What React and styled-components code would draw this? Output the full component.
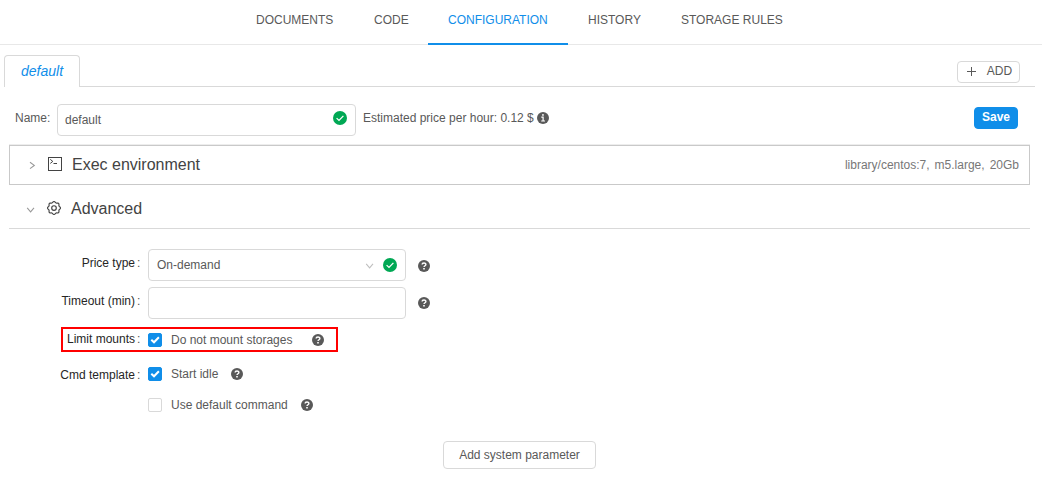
import React from "react";
import styled, { createGlobalStyle, css } from "styled-components";

const Global = createGlobalStyle`
  * { box-sizing: border-box; }
  body {
    margin: 0;
    background: #fff;
    color: #595959;
    font: 12px/18px "Liberation Sans", Arial, sans-serif;
  }
`;

const Page = styled.div`
  width: 1042px;
  height: 477px;
  overflow: hidden;
`;

const Nav = styled.nav`
  display: flex;
  justify-content: center;
  height: 45px;
  padding-right: 3px;
  border-bottom: 1px solid #e8e8e8;
`;

const NavItem = styled.a`
  width: ${(p) => p.$width}px;
  height: 45px;
  padding: 11px 0 0 20px;
  white-space: nowrap;
  color: ${(p) => (p.$active ? "#108ee9" : "#595959")};
  border-bottom: 2px solid ${(p) => (p.$active ? "#108ee9" : "transparent")};
`;

const TabBar = styled.div`
  display: flex;
  align-items: flex-start;
  justify-content: space-between;
  height: 32px;
  margin: 10px 7px 0 4px;
  padding-right: 15px;
  box-shadow: inset 0 -1px #d9d9d9;
`;

const Tab = styled.div`
  width: 76px;
  height: 32px;
  padding-left: 16px;
  border: 1px solid #d9d9d9;
  border-bottom: 0;
  border-radius: 4px 4px 0 0;
  background: #fff;
  color: #108ee9;
  font-size: 14px;
  font-style: italic;
  line-height: 31px;
`;

const Button = styled.button`
  display: flex;
  align-items: center;
  justify-content: center;
  padding: 0;
  border: 1px solid #d9d9d9;
  border-radius: 4px;
  background: #fff;
  color: #595959;
  font: inherit;
`;

const AddButton = styled(Button)`
  width: 63px;
  height: 22px;
  margin-top: 6px;
  gap: 11px;
  padding: 0 0 2px 2px;
`;

const SaveButton = styled(Button)`
  width: 44px;
  height: 22px;
  margin: 3px 12px 0 auto;
  padding-bottom: 2px;
  border-color: #108ee9;
  background: #108ee9;
  color: #fff;
  font-weight: bold;
`;

const ParameterButton = styled(Button)`
  width: 153px;
  height: 28px;
  margin: 24px 0 0 443px;
`;

const NameRow = styled.div`
  display: flex;
  align-items: flex-start;
  height: 32px;
  margin: 17px 12px 0 15px;
`;

const NameLabel = styled.label`
  width: 42px;
  padding-top: 5px;
`;

const Field = styled.div`
  display: flex;
  align-items: center;
  width: ${(p) => p.$width}px;
  height: 32px;
  padding: 0 8px 0 7px;
  border: 1px solid #d9d9d9;
  border-radius: 4px;
`;

const FieldText = styled.span`
  flex: 1;
  padding-left: ${(p) => p.$indent || 0}px;
`;

const FieldIcon = styled.span`
  display: flex;
  margin-left: ${(p) => p.$gap || 0}px;
  padding-bottom: ${(p) => p.$lift || 0}px;
`;

const Price = styled.div`
  display: flex;
  padding: 5px 0 0 7px;
  white-space: nowrap;
  svg { margin: 3px 0 0 3px; }
`;

const SectionHeader = styled.div`
  display: flex;
  align-items: center;
  margin-left: 9px;
  width: 1021px;
  padding: 0 10px 0 16px;
  ${(p) =>
    p.$boxed
      ? css`
          height: 40px;
          margin-top: 9px;
          border: 1px solid #c9c9c9;
          box-shadow: 0 -1px #ededed;
        `
      : css`
          height: 44px;
          padding-top: 4px;
          border-bottom: 1px solid #d9d9d9;
        `}
`;

const SectionTitle = styled.h2`
  flex: 1;
  margin: 0 0 0 ${(p) => p.$gap}px;
  color: #434343;
  font-size: 16px;
  font-weight: normal;
  line-height: 20px;
`;

const Summary = styled.div`
  display: flex;
  gap: 5px;
  color: #777;
`;

const SectionIcon = styled.span`
  display: flex;
  padding-bottom: 2px;
  margin-left: ${(p) => p.$gap}px;
`;

const Form = styled.div`
  display: flex;
  flex-direction: column;
  margin: 20px 0 0 61px;
`;

const FormRow = styled.div`
  display: flex;
  align-items: center;
  height: ${(p) => p.$height}px;
  margin-bottom: ${(p) => p.$gap}px;
`;

const LimitRow = styled(FormRow)`
  width: 277px;
  margin-bottom: 10px;
  padding-right: 12px;
  border: 2px solid #f00;
  justify-content: space-between;
`;

const Group = styled.div`
  display: flex;
  align-items: center;
`;

const FormLabel = styled.label`
  display: flex;
  justify-content: flex-end;
  width: ${(p) => p.$width || 87}px;
  padding-right: 8px;
  padding-bottom: ${(p) => p.$lift || 0}px;
  padding-top: ${(p) => p.$drop || 0}px;
  color: #262626;
  white-space: nowrap;
  &::after {
    content: ${(p) => (p.children ? '":"' : '""')};
    margin-left: 2px;
    width: 3px;
    color: #555;
  }
`;

const Box = styled.span`
  display: flex;
  width: 14px;
  height: 14px;
  margin-right: 9px;
  border-radius: 2px;
  border: 1px solid ${(p) => (p.$checked ? "#108ee9" : "#d9d9d9")};
  background: ${(p) => (p.$checked ? "#108ee9" : "#fff")};
`;

const HelpSlot = styled.span`
  display: flex;
  padding-top: ${(p) => p.$drop || 0}px;
  margin-left: ${(p) => p.$gap}px;
`;

const Checkbox = ({ checked }) => (
  <Box $checked={checked} role="checkbox" aria-checked={!!checked}>
    {checked && (
      <svg width="12" height="12" viewBox="0 0 12 12" fill="none" stroke="#fff" strokeWidth="2">
        <path d="M2.3 5.7 5 8.3 9.9 3.2" />
      </svg>
    )}
  </Box>
);

const HelpIcon = () => (
  <svg width="12" height="12" viewBox="0 0 12 12">
    <circle cx="6" cy="6" r="6" fill="#595959" />
    <path d="M4.1 4.6C4.1 2.4 7.9 2.4 7.9 4.5 7.9 5.8 6 5.7 6 7.1" fill="none" stroke="#fff" strokeWidth="1.4" />
    <rect x="5.2" y="8" width="1.6" height="1.5" fill="#fff" />
  </svg>
);

const InfoIcon = () => (
  <svg width="12" height="12" viewBox="0 0 12 12">
    <circle cx="6" cy="6" r="6" fill="#595959" />
    <path d="M4.3 5.2H6.1V8.9M4.2 9H8" fill="none" stroke="#fff" strokeWidth="1.2" />
    <rect x="5.1" y="2.2" width="1.7" height="1.5" fill="#fff" />
  </svg>
);

const ValidIcon = () => (
  <svg width="14" height="14" viewBox="0 0 14 14">
    <circle cx="7" cy="7" r="7" fill="#00a854" />
    <path d="M3.6 7.1 6 9.4 10.4 4.9" fill="none" stroke="#fff" strokeWidth="1.3" />
  </svg>
);

const Chevron = ({ right, color = "#999" }) => (
  <svg width="12" height="12" viewBox="0 0 12 12" fill="none" stroke={color} strokeWidth="1.1">
    <path d={right ? "M4 3.2 8.3 6.4 4 9.6" : "M2.2 4.9 5.6 8.8 9 4.9"} />
  </svg>
);

const ConsoleIcon = () => (
  <svg width="14" height="14" viewBox="0 0 14 14" fill="none" stroke="#434343">
    <rect x=".5" y=".5" width="13" height="13" />
    <path d="M2.3 2.4 4.8 4.4 2.3 6.4M5.5 6.5H9" />
  </svg>
);

const teeth = Array.from({ length: 64 }, (_, i) => {
  const a = (i / 64) * Math.PI * 2;
  const r = 5.95 + 0.55 * Math.cos(8 * a);
  return `${(7 + r * Math.cos(a)).toFixed(2)},${(7 + r * Math.sin(a)).toFixed(2)}`;
}).join(" ");

const GearIcon = () => (
  <svg width="14" height="14" viewBox="0 0 14 14" fill="none" stroke="#434343" strokeWidth="1.15">
    <polygon points={teeth} />
    <circle cx="7" cy="7" r="2.3" />
  </svg>
);

const PlusIcon = () => (
  <svg width="9" height="9" viewBox="0 0 9 9" stroke="#595959">
    <path d="M0 4.5H9M4.5 0V9" />
  </svg>
);

const Help = ({ gap, drop }) => (
  <HelpSlot $gap={gap} $drop={drop}>
    <HelpIcon />
  </HelpSlot>
);

const navItems = [
  ["DOCUMENTS", 118],
  ["CODE", 74],
  ["CONFIGURATION", 140],
  ["HISTORY", 93],
  ["STORAGE RULES", 142],
];

export default function App() {
  return (
    <Page>
      <Global />
      <Nav>
        {navItems.map(([name, width]) => (
          <NavItem key={name} $width={width} $active={name === "CONFIGURATION"}>
            {name}
          </NavItem>
        ))}
      </Nav>
      <TabBar>
        <Tab>default</Tab>
        <AddButton>
          <PlusIcon />
          ADD
        </AddButton>
      </TabBar>
      <NameRow>
        <NameLabel>Name:</NameLabel>
        <Field $width={299}>
          <FieldText>default</FieldText>
          <FieldIcon $lift={4}>
            <ValidIcon />
          </FieldIcon>
        </Field>
        <Price>
          Estimated price per hour: 0.12 $
          <InfoIcon />
        </Price>
        <SaveButton>Save</SaveButton>
      </NameRow>
      <SectionHeader $boxed>
        <Chevron right />
        <SectionIcon $gap={10}>
          <ConsoleIcon />
        </SectionIcon>
        <SectionTitle $gap={10}>Exec environment</SectionTitle>
        <Summary>
          <span>library/centos:7,</span>
          <span>m5.large,</span>
          <span>20Gb</span>
        </Summary>
      </SectionHeader>
      <SectionHeader>
        <Chevron />
        <SectionIcon $gap={10}>
          <GearIcon />
        </SectionIcon>
        <SectionTitle $gap={10}>Advanced</SectionTitle>
      </SectionHeader>
      <Form>
        <FormRow $height={32} $gap={6}>
          <FormLabel $lift={4}>Price type</FormLabel>
          <Field $width={258}>
            <FieldText $indent={1}>On-demand</FieldText>
            <Chevron color="#bfbfbf" />
            <FieldIcon $gap={7}>
              <ValidIcon />
            </FieldIcon>
          </Field>
          <Help gap={12} drop={1} />
        </FormRow>
        <FormRow $height={32} $gap={8}>
          <FormLabel $lift={4}>Timeout (min)</FormLabel>
          <Field $width={258} />
          <Help gap={12} />
        </FormRow>
        <LimitRow $height={25}>
          <Group>
            <FormLabel $width={85} $lift={2}>Limit mounts</FormLabel>
            <Checkbox checked />
            Do not mount storages
          </Group>
          <Help gap={0} drop={1} />
        </LimitRow>
        <FormRow $height={24} $gap={7}>
          <FormLabel $drop={2}>Cmd template</FormLabel>
          <Checkbox checked />
          Start idle
          <Help gap={13} />
        </FormRow>
        <FormRow $height={24} $gap={0}>
          <FormLabel />
          <Checkbox />
          Use default command
          <Help gap={13} />
        </FormRow>
      </Form>
      <ParameterButton>Add system parameter</ParameterButton>
    </Page>
  );
}
